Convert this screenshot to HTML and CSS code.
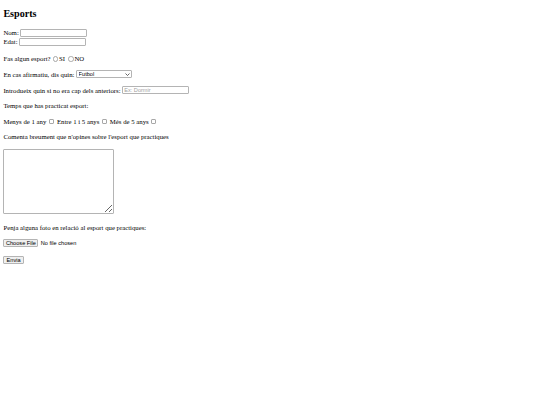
FILE: index.html
```html
<!DOCTYPE html>
<html lang="ca">
<head>
<meta charset="utf-8">
<title>Esports</title>
<link rel="stylesheet" href="styles.css">
</head>
<body>
<h2 class="title">Esports</h2>
<form class="form">
  <div class="row tight"><label>Nom:</label><input type="text" class="field"></div>
  <div class="row"><label>Edat:</label><input type="text" class="field"></div>
  <div class="row para first">
    <span>Fas algun esport?</span>
    <input type="radio" name="fa" class="radio"><span class="opt">SI</span>
    <input type="radio" name="fa" class="radio"><span class="opt">NO</span>
  </div>
  <div class="row para">
    <span>En cas afirmatiu, dis quin:</span>
    <span class="select-wrap">
      <select class="sport"><option>Futbol</option><option>Bàsquet</option><option>Tennis</option><option>Natació</option></select>
      <svg class="chev" viewBox="0 0 10 6" width="5" height="3"><path d="M1 1 L5 5 L9 1" fill="none" stroke="#333" stroke-width="1.5"/></svg>
    </span>
  </div>
  <div class="row para"><span>Introdueix quin si no era cap dels anteriors:</span><input type="text" class="field" placeholder="Ex: Dormir"></div>
  <div class="row para"><span>Temps que has practicat esport:</span></div>
  <div class="row para">
    <span>Menys de 1 any</span><input type="checkbox" class="check">
    <span class="opt2">Entre 1 i 5 anys</span><input type="checkbox" class="check">
    <span class="opt2">Més de 5 anys</span><input type="checkbox" class="check">
  </div>
  <div class="row para"><span>Comenta breument que n'opines sobre l'esport que practiques</span></div>
  <textarea class="comment"></textarea>
  <div class="row para penja"><span>Penja alguna foto en relació al esport que practiques:</span></div>
  <div class="row para"><input type="file" class="upload"></div>
  <div class="row send-row"><input type="submit" value="Envia" class="btn"></div>
</form>
</body>
</html>
```
FILE: styles.css
```css
body {
  margin: 3.375px;
  font-family: "Liberation Serif", "Times New Roman", serif;
  font-size: 6.75px;
  color: #000;
  background: #fff;
}
.title {
  font-size: 10.125px;
  line-height: 11.6px;
  margin: 5px 0 0 0;
  padding-top: 0;
}
.form {
  display: flex;
  flex-direction: column;
  align-items: flex-start;
  margin-top: 8.4px;
}
.row {
  display: flex;
  align-items: center;
  height: 9px;
  white-space: nowrap;
}
.row label {
  margin-right: 1.7px;
}
.para {
  margin-top: 6.6px;
}
.first {
  margin-top: 8px;
}
.field {
  box-sizing: border-box;
  width: 67px;
  height: 8.5px;
  margin: 0;
  padding: 0 1px;
  border: 0.8px solid #b4b4b4;
  border-radius: 1px;
  font-family: "Liberation Sans", Arial, sans-serif;
  font-size: 5.6px;
  background: #fff;
  outline: none;
}
.field::placeholder {
  color: #a0a0a0;
}
.row span + .field {
  margin-left: 1.7px;
}
.radio {
  appearance: none;
  box-sizing: border-box;
  width: 5.5px;
  height: 5.5px;
  margin: 0 0.6px 0 2.2px;
  border: 0.5px solid #a8a8a8;
  border-radius: 50%;
  background: #fff;
}
.opt {
  margin-right: 1.3px;
}
.check {
  appearance: none;
  box-sizing: border-box;
  width: 5.4px;
  height: 5.4px;
  margin: 0 1.3px 0 2.3px;
  border: 0.5px solid #a8a8a8;
  border-radius: 1px;
  background: #fff;
}
.opt2 {
  margin-left: 1.6px;
}
.select-wrap {
  position: relative;
  display: inline-flex;
  margin-left: 1.8px;
}
.sport {
  appearance: none;
  box-sizing: border-box;
  width: 56px;
  height: 8px;
  margin: 0;
  padding: 0 0 0 1.4px;
  border: 0.8px solid #b4b4b4;
  border-radius: 1px;
  background: #fff;
  font-family: "Liberation Sans", Arial, sans-serif;
  font-size: 5.6px;
  line-height: 6px;
  color: #000;
}
.chev {
  position: absolute;
  right: 2.5px;
  top: 2.6px;
}
.comment {
  box-sizing: border-box;
  width: 111px;
  height: 65px;
  margin: 7.5px 0 0 0;
  padding: 0;
  border: 0.8px solid #b4b4b4;
  border-radius: 1px;
  resize: both;
  font-family: "Liberation Mono", monospace;
  font-size: 5.6px;
}
.penja {
  margin-top: 9.5px;
}
.upload {
  font-family: "Liberation Sans", Arial, sans-serif;
  font-size: 5.6px;
  margin: 0;
  color: #000;
}
.upload::file-selector-button {
  box-sizing: border-box;
  height: 8px;
  padding: 0 1.6px;
  margin: 0 2.4px 0 0;
  border: 0.8px solid #b4b4b4;
  border-radius: 1px;
  background: #efefef;
  font-family: "Liberation Sans", Arial, sans-serif;
  font-size: 5.6px;
  color: #000;
}
.send-row {
  margin-top: 8px;
}
.btn {
  box-sizing: border-box;
  height: 8px;
  margin: 0;
  padding: 0 2.2px;
  border: 0.8px solid #b4b4b4;
  border-radius: 1px;
  background: #efefef;
  font-family: "Liberation Sans", Arial, sans-serif;
  font-size: 5.6px;
  line-height: 6px;
  color: #000;
}
```
